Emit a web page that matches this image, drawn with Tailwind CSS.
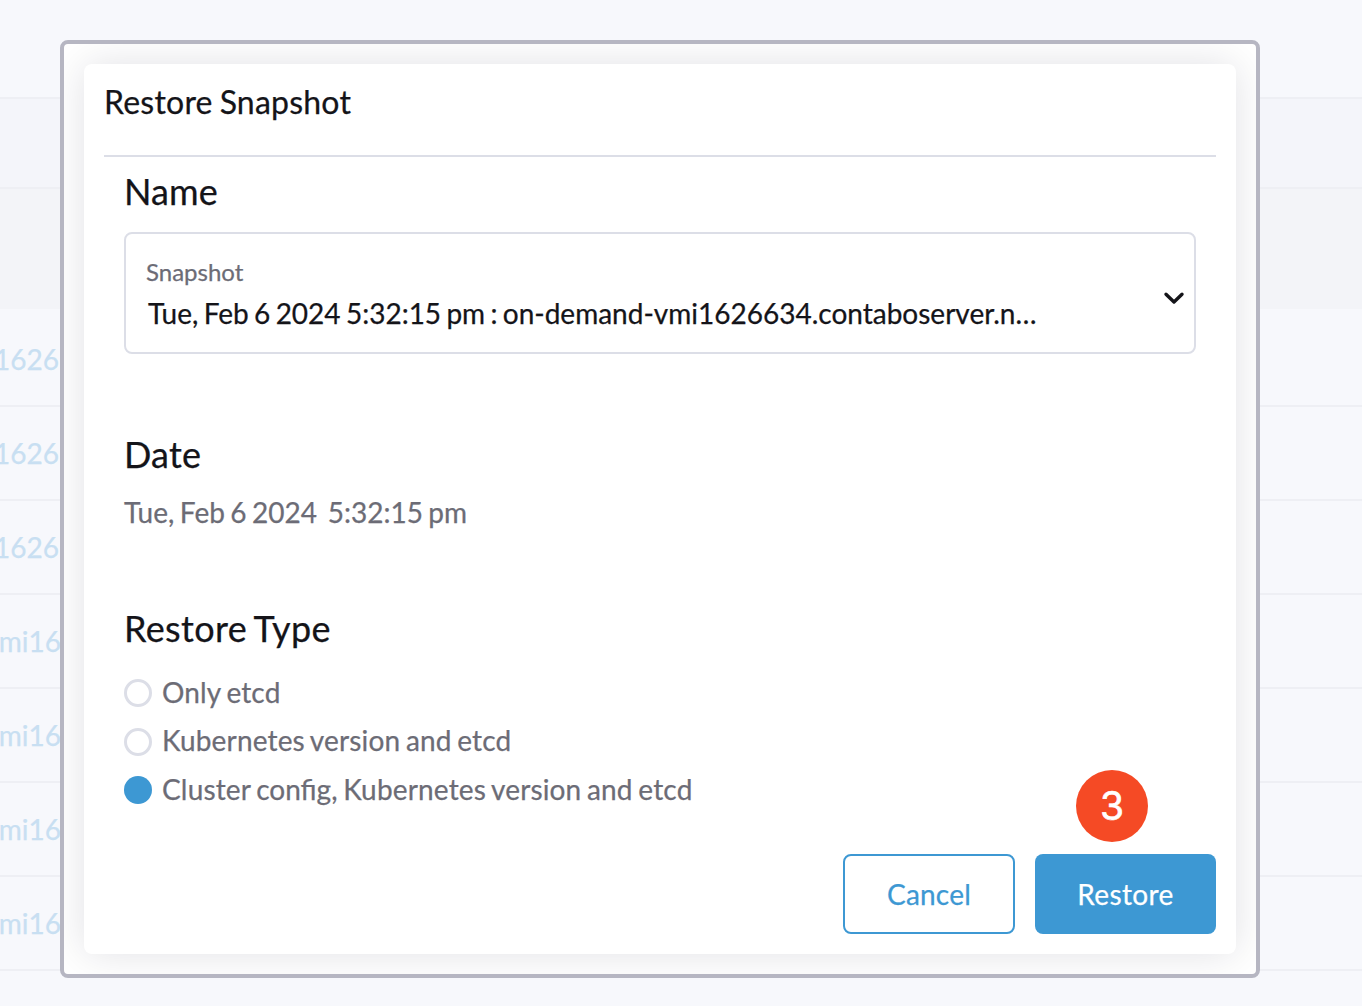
<!DOCTYPE html>
<html lang="en">
<head>
<meta charset="utf-8">
<title>Restore Snapshot</title>
<script src="https://cdn.jsdelivr.net/npm/@tailwindcss/browser@4"></script>
</head>
<body class="relative h-[1006px] w-[1362px] overflow-hidden bg-[#f7f8fc] font-[Lato,sans-serif] text-[28px] leading-[34px] text-[#141419] [-webkit-text-stroke:0.25px]">
  <!-- Snapshot table behind the dialog -->
  <div class="flex h-full flex-col text-[#c8dff2]">
    <div class="h-[99px] border-b-2 border-[#eeeff4]"></div>
    <div class="h-[90px] border-b-2 border-[#eeeff4] bg-[#f4f5fa]"></div>
    <div class="h-[120px] bg-[#f3f4f8]"></div>
    <div class="flex h-[98px] items-center border-b-2 border-[#eeeff4] pt-[3px]"><span class="flex w-[59px] justify-end whitespace-nowrap">1626</span></div>
    <div class="flex h-[94px] items-center border-b-2 border-[#eeeff4] pb-px"><span class="flex w-[59px] justify-end whitespace-nowrap">1626</span></div>
    <div class="flex h-[94px] items-center border-b-2 border-[#eeeff4] pb-px"><span class="flex w-[59px] justify-end whitespace-nowrap">1626</span></div>
    <div class="flex h-[94px] items-center border-b-2 border-[#eeeff4] pb-px"><span class="flex w-[61px] justify-end whitespace-nowrap">mi16</span></div>
    <div class="flex h-[94px] items-center border-b-2 border-[#eeeff4] pb-px"><span class="flex w-[61px] justify-end whitespace-nowrap">mi16</span></div>
    <div class="flex h-[94px] items-center border-b-2 border-[#eeeff4] pb-px"><span class="flex w-[61px] justify-end whitespace-nowrap">mi16</span></div>
    <div class="flex h-[94px] items-center border-b-2 border-[#eeeff4] pb-px"><span class="flex w-[61px] justify-end whitespace-nowrap">mi16</span></div>
  </div>

  <!-- Dialog -->
  <div class="absolute left-[60px] top-[40px] h-[938px] w-[1200px] overflow-hidden rounded-lg border-4 border-[#b6b6c2] bg-white p-5">
    <div class="flex h-[890px] flex-col rounded-lg bg-white p-5 shadow-[0_0_40px_rgba(20,20,40,0.12)]">
      <h4 class="-mt-px h-[74px] border-b-2 border-[#dcdee7] text-[32px] leading-[38px] tracking-[0.22px] [word-spacing:-1.5px]">Restore Snapshot</h4>
      <div class="flex grow flex-col px-5">
        <h3 class="mt-[12px] text-[36px] leading-[44px] tracking-[0.1px]">Name</h3>
        <div class="mt-[19px] flex h-[122px] items-center rounded-lg border-2 border-[#dcdee7] pl-5 pr-[9px]">
          <div class="flex grow flex-col">
            <label class="text-[24px] leading-[30px] text-[#6c6c76]">Snapshot</label>
            <span class="mt-[9px] pl-[2px] whitespace-nowrap [word-spacing:-1.85px]">Tue, Feb 6 2024 5:32:15 pm : on-demand-vmi1626634.contaboserver.n…</span>
          </div>
          <svg class="mt-[10px] h-[14px] w-[22px]" viewBox="0 0 22 14" fill="none" stroke="#141419" stroke-width="3.4" stroke-linecap="round" stroke-linejoin="round"><path d="M3 3.3 11 11l8-7.7"/></svg>
        </div>
        <h3 class="mt-[78px] text-[36px] leading-[44px] tracking-[0.2px]">Date</h3>
        <p class="mt-[19px] whitespace-pre text-[#6c6c76] [word-spacing:-1.75px]">Tue, Feb 6 2024  5:32:15 pm</p>
        <h3 class="mt-[77px] text-[36px] leading-[44px] tracking-[0.36px] [word-spacing:-2px]">Restore Type</h3>
        <div class="mt-[26px] flex flex-col gap-[14.5px] tracking-[0.16px] text-[#6c6c76] [word-spacing:-1.7px]">
          <label class="flex h-[34px] items-center gap-[10px]"><span class="size-7 rounded-full border-3 border-[#dcdee7]"></span><span class="-mt-[3px]">Only etcd</span></label>
          <label class="flex h-[34px] items-center gap-[10px]"><span class="size-7 rounded-full border-3 border-[#dcdee7]"></span><span class="-mt-[3px]">Kubernetes version and etcd</span></label>
          <label class="flex h-[34px] items-center gap-[10px]"><span class="size-7 rounded-full bg-[#3d98d3]"></span><span class="-mt-[3px]">Cluster <span class="tracking-normal">config,</span> Kubernetes version and etcd</span></label>
        </div>
      </div>
      <div class="flex justify-end gap-5">
        <button class="h-20 w-[172px] rounded-lg border-2 border-[#3d98d3] tracking-[0.2px] text-[#3d98d3]">Cancel</button>
        <button class="h-20 w-[181px] rounded-lg bg-[#3d98d3] tracking-[0.4px] text-white">Restore</button>
      </div>
    </div>
  </div>

  <!-- Step marker -->
  <div class="absolute left-[1076px] top-[770px] flex size-[72px] items-center justify-center rounded-full bg-[#f54a25] font-[Inter,sans-serif] text-[39px] font-normal text-white [-webkit-text-stroke:0.6px]">3</div>
</body>
</html>
